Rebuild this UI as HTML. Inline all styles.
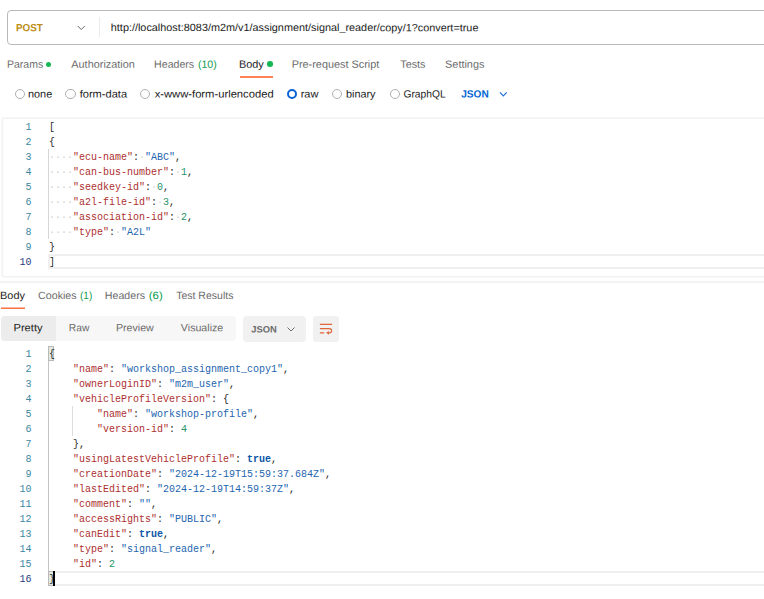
<!DOCTYPE html>
<html><head><meta charset="utf-8">
<style>
*{box-sizing:border-box;margin:0;padding:0}
html,body{width:764px;height:599px;overflow:hidden;background:#fff}
body{font-family:"Liberation Sans",sans-serif;font-size:10.5px;color:#6b6b6b;position:relative}
.abs{position:absolute;white-space:nowrap}
.t{position:absolute;white-space:nowrap;line-height:14px;font-size:10.5px;transform-origin:0 0;display:inline-block}
.urlbox{position:absolute;left:7px;top:10px;width:780px;height:35px;border:1px solid #b9b9b9;border-radius:4px;background:#fff}
.vdiv{position:absolute;left:99px;top:17px;width:1px;height:20px;background:#ebebeb}
.dot{position:absolute;width:5.5px;height:5.5px;border-radius:50%;background:#14b955}
.radio{position:absolute;top:89.2px;width:10.2px;height:10.2px;border:1px solid #b0b0b0;border-radius:50%;background:#fff}
.radio.on{border:2.9px solid #0a63d3}
.hl{position:absolute;background:#f0f0f0}
.code{font-family:"Liberation Mono",monospace;font-size:10px;line-height:15px;position:absolute;white-space:pre}
.ln{color:#3d879f;text-align:right;position:absolute;width:20px}
.k{color:#ad2f2f}.s{color:#2465b0}.n{color:#26946a}.p{color:#2a2a2a}.b{color:#0c55a6;font-weight:bold}.w{color:#cfcfcf}
.bm{position:absolute;width:6px;height:15px;background:#e3eae3;border:1px solid #b9b9b9}
</style></head><body>
<div class="urlbox"></div>
<svg class="abs" style="left:76px;top:24.4px" width="10" height="8" viewBox="0 0 10 8"><path d="M1.8 2 L5.25 5.6 L8.7 2" fill="none" stroke="#6b6b6b" stroke-width="1"/></svg>
<div class="vdiv"></div>
<div class="dot" style="left:45.7px;top:61.5px"></div>
<div class="dot" style="left:267.3px;top:61.4px"></div>
<div class="abs" style="left:239.8px;top:76.2px;width:33px;height:2px;background:#ff8259"></div>

<div class="radio" style="left:14.6px"></div>
<div class="radio" style="left:65.4px"></div>
<div class="radio" style="left:140.3px"></div>
<div class="radio on" style="left:286.9px"></div>
<div class="radio" style="left:332.3px"></div>
<div class="radio" style="left:389.6px"></div>
<svg class="abs" style="left:498px;top:90px" width="10" height="8" viewBox="0 0 10 8"><path d="M1.9 2.3 L5.3 5.9 L8.7 2.3" fill="none" stroke="#1f70dd" stroke-width="1.15"/></svg>

<!-- editor frame -->
<div class="abs" style="left:1px;top:117px;width:800px;height:161px;border:1px solid #f8f8f8;border-radius:3px"></div><div class="abs" style="left:2px;top:118px;width:800px;height:159px;border:1px solid #f1f1f1;border-radius:2px"></div>
<div class="hl" style="left:0;top:281px;width:764px;height:2px;background:#f3f3f3"></div>

<!-- request code -->
<div class="abs" style="left:48px;top:254px;width:760px;height:15px;border:2px solid #efefef"></div>
<div class="abs" style="left:48px;top:149px;width:1px;height:90px;background:#d6d6d6"></div>
<div class="code ln" style="left:11.5px;top:119.6px">1
2
3
4
5
6
7
8
9
<span style="color:#2a3c80">10</span></div>
<div class="code" style="left:49px;top:119.6px"><span class="p">[</span>
<span class="p">{</span>
<span class="w">····</span><span class="k">"ecu-name"</span><span class="p">:</span><span class="w">·</span><span class="s">"ABC"</span><span class="p">,</span>
<span class="w">····</span><span class="k">"can-bus-number"</span><span class="p">:</span><span class="w">·</span><span class="n">1</span><span class="p">,</span>
<span class="w">····</span><span class="k">"seedkey-id"</span><span class="p">:</span><span class="w">·</span><span class="n">0</span><span class="p">,</span>
<span class="w">····</span><span class="k">"a2l-file-id"</span><span class="p">:</span><span class="w">·</span><span class="n">3</span><span class="p">,</span>
<span class="w">····</span><span class="k">"association-id"</span><span class="p">:</span><span class="w">·</span><span class="n">2</span><span class="p">,</span>
<span class="w">····</span><span class="k">"type"</span><span class="p">:</span><span class="w">·</span><span class="s">"A2L"</span>
<span class="p">}</span>
<span class="p">]</span></div>

<!-- response tabs -->
<div class="abs" style="left:1px;top:307px;width:24px;height:2px;background:linear-gradient(#ffb59b 50%,#fb7443 50%)"></div>
<div class="abs" style="left:1px;top:316px;width:234.5px;height:25px;background:#f7f7f7;border-radius:4px"></div>
<div class="abs" style="left:1px;top:316px;width:54.8px;height:25px;background:#ececec;border-radius:4px 0 0 4px"></div>
<div class="abs" style="left:242.7px;top:316px;width:63px;height:26px;background:#f1f1f1;border-radius:4px"></div>
<svg class="abs" style="left:286px;top:325px" width="10" height="8" viewBox="0 0 10 8"><path d="M1.5 2.5 L5 6 L8.5 2.5" fill="none" stroke="#6b6b6b" stroke-width="1"/></svg>
<div class="abs" style="left:313px;top:316px;width:26.2px;height:26.4px;background:#f1f1f1;border-radius:3px"></div>
<svg class="abs" style="left:318px;top:321px" width="16" height="16" viewBox="0 0 16 16"><path d="M1.9 3.4H14.1M1.9 7.6H11.5a2.1 2.1 0 0 1 0 4.2H10.5M1.9 11.9H6.2" fill="none" stroke="#e0663b" stroke-width="1.15"/><path d="M8.1 11.8L10.9 9.9V13.7Z" fill="#e0663b"/></svg>

<!-- response code -->
<div class="abs" style="left:48px;top:571px;width:760px;height:15px;border:2px solid #efefef"></div>
<div class="abs" style="left:47.5px;top:361px;width:1.5px;height:211px;background:#c4c4c4"></div>
<div class="abs" style="left:72px;top:406px;width:1px;height:30px;background:#dcdcdc"></div>
<div class="bm" style="left:48px;top:346px"></div>
<div class="bm" style="left:48px;top:571px"></div>
<div class="code ln" style="left:11.5px;top:346.6px">1
2
3
4
5
6
7
8
9
10
11
12
13
14
15
<span style="color:#2a3c80">16</span></div>
<div class="code" style="left:49px;top:346.6px"><span class="p">{</span>
    <span class="k">"name"</span><span class="p">: </span><span class="s">"workshop_assignment_copy1"</span><span class="p">,</span>
    <span class="k">"ownerLoginID"</span><span class="p">: </span><span class="s">"m2m_user"</span><span class="p">,</span>
    <span class="k">"vehicleProfileVersion"</span><span class="p">: {</span>
        <span class="k">"name"</span><span class="p">: </span><span class="s">"workshop-profile"</span><span class="p">,</span>
        <span class="k">"version-id"</span><span class="p">: </span><span class="n">4</span>
    <span class="p">},</span>
    <span class="k">"usingLatestVehicleProfile"</span><span class="p">: </span><span class="b">true</span><span class="p">,</span>
    <span class="k">"creationDate"</span><span class="p">: </span><span class="s">"2024-12-19T15:59:37.684Z"</span><span class="p">,</span>
    <span class="k">"lastEdited"</span><span class="p">: </span><span class="s">"2024-12-19T14:59:37Z"</span><span class="p">,</span>
    <span class="k">"comment"</span><span class="p">: </span><span class="s">""</span><span class="p">,</span>
    <span class="k">"accessRights"</span><span class="p">: </span><span class="s">"PUBLIC"</span><span class="p">,</span>
    <span class="k">"canEdit"</span><span class="p">: </span><span class="b">true</span><span class="p">,</span>
    <span class="k">"type"</span><span class="p">: </span><span class="s">"signal_reader"</span><span class="p">,</span>
    <span class="k">"id"</span><span class="p">: </span><span class="n">2</span>
<span class="p">}</span></div>
<div class="abs" style="left:52.5px;top:571px;width:2px;height:15px;background:#000"></div>

<span class="t" style="left:15px;top:20px;font-weight:bold;color:#bd8d17;transform:translate(0.89px,0.30px) scaleX(0.9405) rotate(0.05deg)">POST</span>
<span class="t" style="left:110px;top:19px;color:#212121;transform:translate(0.83px,0.90px) scaleX(1.0333) rotate(0.05deg)">http://localhost:8083/m2m/v1/assignment/signal_reader/copy/1?convert=true</span>
<span class="t" style="left:7px;top:56px;color:#6b6b6b;transform:translate(0.03px,0.70px) scaleX(0.9978) rotate(0.05deg)">Params</span>
<span class="t" style="left:71px;top:56px;color:#6b6b6b;transform:translate(0.30px,0.70px) scaleX(1.0375) rotate(0.05deg)">Authorization</span>
<span class="t" style="left:154px;top:56px;color:#6b6b6b;transform:translate(0.12px,0.70px) scaleX(1.0085) rotate(0.05deg)">Headers</span>
<span class="t" style="left:197px;top:56px;color:#0d9b4e;transform:translate(0.97px,0.70px) scaleX(1.0014) rotate(0.05deg)">(10)</span>
<span class="t" style="left:238px;top:56px;color:#212121;transform:translate(0.99px,0.70px) scaleX(1.0348) rotate(0.05deg)">Body</span>
<span class="t" style="left:291px;top:56px;color:#6b6b6b;transform:translate(0.69px,0.70px) scaleX(1.0356) rotate(0.05deg)">Pre-request Script</span>
<span class="t" style="left:400px;top:56px;color:#6b6b6b;transform:translate(0.24px,0.70px) scaleX(1.0304) rotate(0.05deg)">Tests</span>
<span class="t" style="left:445px;top:56px;color:#6b6b6b;transform:translate(0.08px,0.70px) scaleX(1.0378) rotate(0.05deg)">Settings</span>
<span class="t" style="left:28px;top:86px;color:#212121;transform:translate(0.02px,0.50px) scaleX(1.0350) rotate(0.05deg)">none</span>
<span class="t" style="left:79px;top:86px;color:#212121;transform:translate(0.67px,0.50px) scaleX(1.0547) rotate(0.05deg)">form-data</span>
<span class="t" style="left:154px;top:86px;color:#212121;transform:translate(0.67px,0.50px) scaleX(1.0676) rotate(0.05deg)">x-www-form-urlencoded</span>
<span class="t" style="left:300px;top:86px;color:#212121;transform:translate(0.71px,0.50px) scaleX(1.0481) rotate(0.05deg)">raw</span>
<span class="t" style="left:345px;top:86px;color:#212121;transform:translate(0.95px,0.50px) scaleX(1.0332) rotate(0.05deg)">binary</span>
<span class="t" style="left:403px;top:86px;color:#212121;transform:translate(0.41px,0.50px) scaleX(0.9770) rotate(0.05deg)">GraphQL</span>
<span class="t" style="left:461px;top:86px;color:#0265d2;font-weight:bold;transform:translate(0.18px,0.50px) scaleX(0.9622) rotate(0.05deg)">JSON</span>
<span class="t" style="left:0px;top:288px;color:#212121;transform:translate(0.09px,0.00px) scaleX(1.0391) rotate(0.05deg)">Body</span>
<span class="t" style="left:38px;top:288px;color:#6b6b6b;transform:translate(0.09px,0.00px) scaleX(1.0162) rotate(0.05deg)">Cookies</span>
<span class="t" style="left:80px;top:288px;color:#0d9b4e;transform:translate(0.00px,0.00px) scaleX(0.9565) rotate(0.05deg)">(1)</span>
<span class="t" style="left:104px;top:288px;color:#6b6b6b;transform:translate(0.81px,0.00px) scaleX(1.0137) rotate(0.05deg)">Headers</span>
<span class="t" style="left:148px;top:288px;color:#0d9b4e;transform:translate(0.82px,0.00px) scaleX(1.0870) rotate(0.05deg)">(6)</span>
<span class="t" style="left:176px;top:288px;color:#6b6b6b;transform:translate(0.15px,0.00px) scaleX(1.0018) rotate(0.05deg)">Test Results</span>
<span class="t" style="left:13px;top:320px;color:#212121;transform:translate(0.47px,0.30px) scaleX(1.0604) rotate(0.05deg)">Pretty</span>
<span class="t" style="left:68px;top:320px;color:#6b6b6b;transform:translate(0.85px,0.30px) scaleX(0.9739) rotate(0.05deg)">Raw</span>
<span class="t" style="left:115px;top:320px;color:#6b6b6b;transform:translate(0.91px,0.30px) scaleX(1.0137) rotate(0.05deg)">Preview</span>
<span class="t" style="left:180px;top:320px;color:#6b6b6b;transform:translate(0.87px,0.30px) scaleX(1.0133) rotate(0.05deg)">Visualize</span>
<span class="t" style="left:251px;top:322px;color:#6b6b6b;font-weight:bold;font-size:9.3px;transform:translate(0.27px,0.50px) scaleX(1.0082) rotate(0.05deg)">JSON</span>
</body></html>
